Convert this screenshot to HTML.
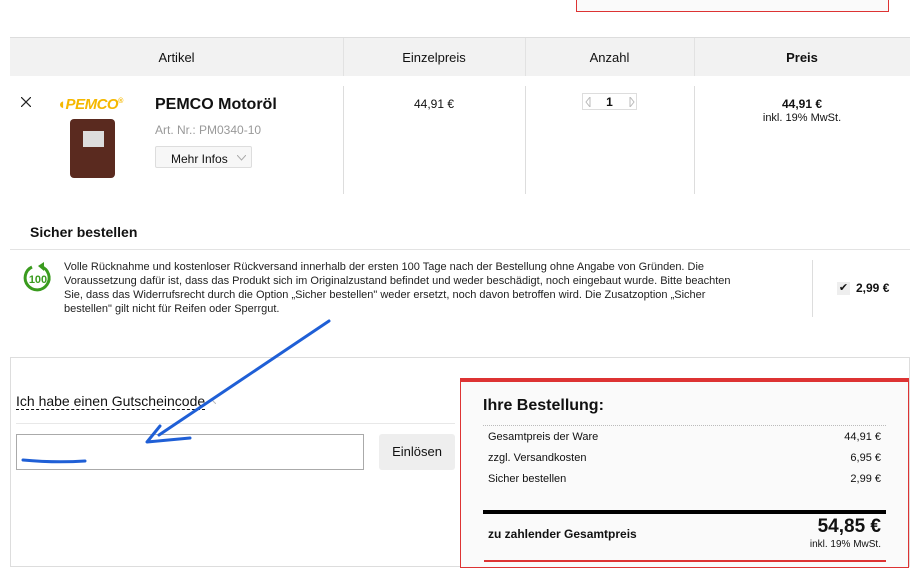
<!DOCTYPE html>
<html><head><meta charset="utf-8"><style>
*{box-sizing:border-box;margin:0;padding:0}
body{width:911px;height:561px;overflow:hidden;background:#fff;font-family:"Liberation Sans",sans-serif;color:#111;position:relative;font-size:12px}
.a{position:absolute}
</style></head><body>
<div class="a" style="left:576px;top:-2px;width:313px;height:14px;border:1px solid #d33;border-top:none;background:#fafafa"></div>
<div class="a" style="left:10px;top:37px;width:900px;height:1px;background:#ddd"></div>
<div class="a" style="left:10px;top:38px;width:900px;height:38px;background:#f2f2f2"></div>
<div class="a" style="left:343px;top:38px;width:1px;height:38px;background:#e2e2e2"></div>
<div class="a" style="left:525px;top:38px;width:1px;height:38px;background:#e2e2e2"></div>
<div class="a" style="left:694px;top:38px;width:1px;height:38px;background:#e2e2e2"></div>
<div class="a" style="left:10px;top:50px;width:333px;text-align:center;font-size:13px">Artikel</div>
<div class="a" style="left:343px;top:50px;width:182px;text-align:center;font-size:13px">Einzelpreis</div>
<div class="a" style="left:525px;top:50px;width:169px;text-align:center;font-size:13px">Anzahl</div>
<div class="a" style="left:694px;top:50px;width:216px;text-align:center;font-weight:bold;font-size:13px">Preis</div>
<div class="a" style="left:343px;top:86px;width:1px;height:108px;background:#ddd"></div>
<div class="a" style="left:525px;top:86px;width:1px;height:108px;background:#ddd"></div>
<div class="a" style="left:694px;top:86px;width:1px;height:108px;background:#ddd"></div>
<svg class="a" style="left:21px;top:97px" width="10" height="10"><path d="M0 0L10 10M10 0L0 10" stroke="#222" stroke-width="1.2"/></svg>
<div class="a" style="left:57px;top:96px;font-size:15px;font-weight:bold;font-style:italic;color:#f5b800;letter-spacing:-0.5px">◖PEMCO<sup style="font-size:7px">®</sup></div>
<div class="a" style="left:70px;top:119px;width:45px;height:59px;background:#5a2a1f;border-radius:4px"></div>
<div class="a" style="left:83px;top:131px;width:21px;height:16px;background:#ddd"></div>
<div class="a" style="left:155px;top:96px;font-size:16px;font-weight:bold">PEMCO Motoröl</div>
<div class="a" style="left:155px;top:123px;font-size:12px;color:#999">Art. Nr.: PM0340-10</div>
<div class="a" style="left:155px;top:146px;width:97px;height:22px;border:1px solid #ddd;border-radius:2px;background:#f7f7f7;font-size:12px;padding:5px 0 0 15px">Mehr Infos</div>
<svg class="a" style="left:237px;top:155px" width="9" height="6"><path d="M0 0L4.5 5L9 0" fill="none" stroke="#aaa"/></svg>
<div class="a" style="left:343px;top:97px;width:182px;text-align:center">44,91 €</div>
<div class="a" style="left:582px;top:93px;width:55px;height:17px;border:1px solid #ddd;font-size:12px;font-weight:bold;text-align:center;padding-top:1px">1</div>
<svg class="a" style="left:585px;top:97px" width="50" height="10"><path d="M5 0L1 5L5 10Z M45 0L49 5L45 10Z" fill="none" stroke="#bbb"/></svg>
<div class="a" style="left:694px;top:97px;width:216px;text-align:center;font-weight:bold">44,91 €</div>
<div class="a" style="left:694px;top:112px;width:216px;text-align:center;font-size:11px">inkl. 19% MwSt.</div>
<div class="a" style="left:30px;top:224px;font-size:14px;font-weight:bold">Sicher bestellen</div>
<div class="a" style="left:10px;top:249px;width:900px;height:1px;background:#e3e3e3"></div>
<svg class="a" style="left:22px;top:262px" width="32" height="32" viewBox="0 0 32 32"><path d="M19 4.5 A12 12 0 1 1 10 5" fill="none" stroke="#3a9b1e" stroke-width="3"/><path d="M16 4 L22 0 L22 9 Z" fill="#3a9b1e"/><text x="16" y="21" text-anchor="middle" font-family="Liberation Sans" font-weight="bold" font-size="11" fill="#3a9b1e">100</text></svg>
<div class="a" style="left:64px;top:260px;width:670px;font-size:11px;line-height:14px;color:#222">Volle Rücknahme und kostenloser Rückversand innerhalb der ersten 100 Tage nach der Bestellung ohne Angabe von Gründen. Die Voraussetzung dafür ist, dass das Produkt sich im Originalzustand befindet und weder beschädigt, noch eingebaut wurde. Bitte beachten Sie, dass das Widerrufsrecht durch die Option „Sicher bestellen" weder ersetzt, noch davon betroffen wird. Die Zusatzoption „Sicher bestellen" gilt nicht für Reifen oder Sperrgut.</div>
<div class="a" style="left:812px;top:260px;width:1px;height:57px;background:#ddd"></div>
<div class="a" style="left:837px;top:282px;width:13px;height:13px;background:#eee;font-size:11px;text-align:center;line-height:13px">✔</div>
<div class="a" style="left:856px;top:281px;font-weight:bold;font-size:12px">2,99 €</div>
<div class="a" style="left:10px;top:357px;width:900px;height:210px;border:1px solid #ddd"></div>
<div class="a" style="left:16px;top:393px;font-size:14px;border-bottom:1px dashed #111;line-height:16px">Ich habe einen Gutscheincode</div>
<svg class="a" style="left:206px;top:398px" width="10" height="6"><path d="M0 6L5 1L10 6" fill="none" stroke="#bbb"/></svg>
<div class="a" style="left:16px;top:423px;width:439px;height:1px;background:#e8e8e8"></div>
<div class="a" style="left:16px;top:434px;width:348px;height:36px;border:1px solid #aaa"></div>
<div class="a" style="left:379px;top:434px;width:76px;height:36px;background:#eee;border-radius:3px;text-align:center;line-height:36px;font-size:13px">Einlösen</div>
<svg class="a" style="left:0;top:0" width="911" height="561"><g stroke="#1f5fd6" stroke-width="3" fill="none" stroke-linecap="round" stroke-linejoin="round"><path d="M329 321 L159 435"/><path d="M160 426 L147 442 L190 438"/><path d="M23 460 Q55 463 85 461"/></g></svg>
<div class="a" style="left:460px;top:378px;width:449px;height:190px;background:#fafafa;border:1px solid #d33;border-top:4px solid #d33"></div>
<div class="a" style="left:483px;top:397px;font-size:16px;font-weight:bold">Ihre Bestellung:</div>
<div class="a" style="left:483px;top:425px;width:403px;border-top:1px dotted #bbb"></div>
<div class="a" style="left:488px;top:431px;font-size:11px">Gesamtpreis der Ware</div><div class="a" style="left:760px;top:431px;width:121px;text-align:right;font-size:11px">44,91 €</div>
<div class="a" style="left:488px;top:452px;font-size:11px">zzgl. Versandkosten</div><div class="a" style="left:760px;top:452px;width:121px;text-align:right;font-size:11px">6,95 €</div>
<div class="a" style="left:488px;top:473px;font-size:11px">Sicher bestellen</div><div class="a" style="left:760px;top:473px;width:121px;text-align:right;font-size:11px">2,99 €</div>
<div class="a" style="left:483px;top:510px;width:403px;height:4px;background:#000"></div>
<div class="a" style="left:488px;top:527px;font-size:12px;font-weight:bold">zu zahlender Gesamtpreis</div>
<div class="a" style="left:740px;top:516px;width:141px;text-align:right;font-size:19px;font-weight:bold">54,85 €</div>
<div class="a" style="left:740px;top:539px;width:141px;text-align:right;font-size:10px">inkl. 19% MwSt.</div>
<div class="a" style="left:484px;top:560px;width:402px;height:2px;background:#d33"></div>
</body></html>
